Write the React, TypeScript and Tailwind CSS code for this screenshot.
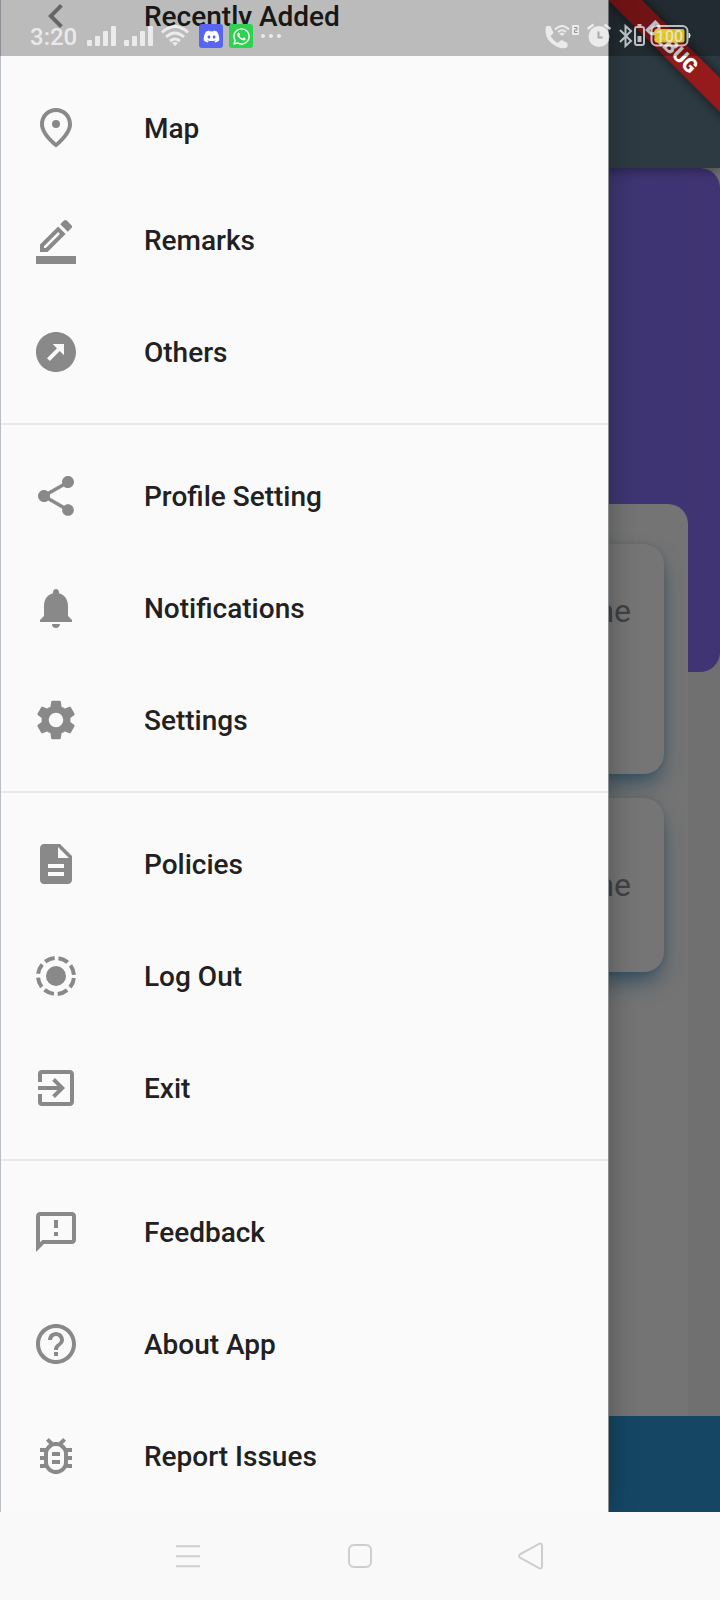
import type { ReactNode } from "react";
import { MdShare, MdNotifications, MdSettings, MdDescription, MdExitToApp, MdOutlineFeedback, MdHelpOutline, MdOutlineBugReport, MdOutbound } from "react-icons/md";
import { FaDiscord, FaWhatsapp } from "react-icons/fa";

function Svg({ children }: { children: ReactNode }) {
  return <svg viewBox="0 0 24 24" className="size-12" fill="currentColor">{children}</svg>;
}

const back = <Svg><path d="M15.41 7.41 14 6l-6 6 6 6 1.41-1.41L10.83 12z" /></Svg>;
const pin = (
  <Svg>
    <path d="M12 4c3.35 0 6 2.57 6 6.2 0 2.34-1.95 5.44-6 9.14-4.05-3.7-6-6.79-6-9.14C6 6.57 8.65 4 12 4m0-2C7.8 2 4 5.22 4 10.2c0 3.22 2.67 7.15 8 11.6 5.33-4.45 8-8.38 8-11.6C20 5.22 16.2 2 12 2z" />
    <circle cx="12" cy="10" r="2" />
  </Svg>
);
const pencil = (
  <Svg>
    <path d="M16.81 8.94l-3.75-3.75L4 14.25V18h3.75l9.06-9.06zM6 16v-.92l7.06-7.06.92.92L6.92 16H6zM19.71 6.04a1 1 0 0 0 0-1.41l-2.34-2.34a1 1 0 0 0-1.41 0l-1.83 1.83 3.75 3.75 1.83-1.83zM2 20h20v4H2z" />
  </Svg>
);
const motion = (
  <Svg>
    <circle cx="12" cy="12" r="5" />
    <circle cx="12" cy="12" r="9" fill="none" stroke="currentColor" strokeWidth="2" strokeDasharray="5.07 2" strokeDashoffset="-1" />
  </Svg>
);

type Item = { label: string; icon: ReactNode };
const groups: Item[][] = [
  [
    { label: "Recently Added", icon: back },
    { label: "Map", icon: pin },
    { label: "Remarks", icon: pencil },
    { label: "Others", icon: <MdOutbound className="size-12" /> },
  ],
  [
    { label: "Profile Setting", icon: <MdShare className="size-12" /> },
    { label: "Notifications", icon: <MdNotifications className="size-12" /> },
    { label: "Settings", icon: <MdSettings className="size-12" /> },
  ],
  [
    { label: "Policies", icon: <MdDescription className="size-12" /> },
    { label: "Log Out", icon: motion },
    { label: "Exit", icon: <MdExitToApp className="size-12" /> },
  ],
  [
    { label: "Feedback", icon: <MdOutlineFeedback className="size-12" /> },
    { label: "About App", icon: <MdHelpOutline className="size-12" /> },
    { label: "Report Issues", icon: <MdOutlineBugReport className="size-12" /> },
  ],
];

function Drawer() {
  return (
    <nav className="absolute left-0 top-0 h-[1512px] w-[608px] overflow-hidden border-l border-[#bbc0c6] bg-[#fafafa] shadow-[1px_0_0_#8b8f92,2px_0_26px_rgba(0,0,0,0.3)]">
      <div className="-mt-10">
        {groups.map((items, g) => (
          <div key={g} className={g ? "mt-[15px] border-t-2 border-[#e8e8e8] pt-[15px]" : ""}>
            {items.map((item) => (
              <div key={item.label} className="flex h-28 items-center pl-[31px]">
                <span className="w-28 text-[#898989]">{item.icon}</span>
                <span className="pt-0.5 text-[28px] font-medium leading-8 text-[#212121]">{item.label}</span>
              </div>
            ))}
          </div>
        ))}
      </div>
    </nav>
  );
}

function Card({ className }: { className: string }) {
  return (
    <div className={`flex w-[640px] items-center justify-end rounded-[20px] bg-[#757575] pr-[33px] text-[32px] leading-9 text-[#414141] shadow-[0_12px_22px_-4px_rgba(34,68,90,0.85),0_0_4px_rgba(60,66,72,0.25)] ${className}`}>
      Time
    </div>
  );
}

function Backdrop() {
  return (
    <div className="h-[1512px] overflow-hidden bg-[#707070]">
      <div className="relative h-[168px] bg-[#2d3a42] shadow-[0_3px_10px_rgba(0,0,0,0.35)]" />
      <div className="h-[504px] rounded-[20px] bg-linear-to-r from-[#223a6b] to-[#413474] pt-[336px]">
        <div className="ml-8 h-[912px] w-[656px] rounded-t-[20px] bg-[#747474] pt-10">
          <Card className="-ml-2 h-[230px] pb-[96px]" />
          <Card className="-ml-2 mt-6 h-[174px]" />
        </div>
        <div className="h-24 bg-[#154765]" />
      </div>
    </div>
  );
}

function Signal() {
  return (
    <svg viewBox="0 0 29 20" className="h-5 w-[29px]" fill="currentColor">
      <rect y="14" width="5" height="6" rx="1" />
      <rect x="8" y="10" width="5" height="10" rx="1" />
      <rect x="16" y="5" width="5" height="15" rx="1" />
      <rect x="24" width="5" height="20" rx="1" />
    </svg>
  );
}

function StatusBar() {
  return (
    <header className="absolute left-0 top-0 flex h-14 w-full items-center bg-black/25 pl-[30px] pt-4 text-white/70">
      <span className="w-[57px] pt-0.5 text-2xl font-medium leading-8">3:20</span>
      <Signal />
      <span className="w-2" />
      <Signal />
      <svg viewBox="0 0 28 22" className="ml-2 h-[22px] w-7" fill="none" stroke="currentColor" strokeWidth="3">
        <path d="M1 7.5Q14-4.5 27 7.5M5 12Q14 4 23 12M9 16Q14 12 19 16" />
        <path d="m14 21-3-3q3-2 6 0z" fill="currentColor" stroke="none" />
      </svg>
      <span className="ml-[10px] flex size-6 items-center justify-center rounded-[3px] bg-[#5865f2] text-white"><FaDiscord className="size-[17px]" /></span>
      <span className="ml-1.5 flex size-6 items-center justify-center rounded-[3px] bg-[#2fd150] text-white"><FaWhatsapp className="size-[19px]" /></span>
      <span className="ml-2 flex gap-1">
        <i className="size-1 rounded-full bg-current" />
        <i className="size-1 rounded-full bg-current" />
        <i className="size-1 rounded-full bg-current" />
      </span>
      <svg viewBox="0 0 150 26" className="ml-auto mr-[25px] h-[26px] w-[150px]" fill="none" stroke="currentColor">
        <path d="M4 2h4l3 7-3 3q3 5 7 7l4-3 6 3v4q-3 2-7 1Q3 19 3 6q0-3 1-4z" transform="translate(-2.500 1)" fill="currentColor" stroke="none" />
        <path d="M10 6.500Q17-.5 24 6.500M13 9Q17 5.500 21 9" strokeWidth="2" />
        <path d="m17 13-3-2.500q3-1.500 6 0z" fill="currentColor" stroke="none" />
        <rect x="27" y="2" width="7" height="10" rx="1" fill="currentColor" stroke="none" />
        <path d="M29 4.500h3v2.500h-2.500v2.500h3" stroke="#8f8f8f" strokeWidth="1" />
        <circle cx="54" cy="13.500" r="10.500" fill="currentColor" stroke="none" />
        <path d="m42.500 6 6-4.500m17 4.500-6-4.500" strokeWidth="2.500" />
        <path d="M53.500 8.500v6h4" stroke="#aaa" strokeWidth="2" />
        <path d="m75 7 11 11-5.500 5V3l5.500 5-11 11" strokeWidth="2" />
        <rect x="90" y="4" width="9" height="18" rx="2" strokeWidth="2" />
        <path d="M92.500 2h4" strokeWidth="2" />
        <path d="M94.500 13v6" strokeWidth="4" />
        <rect x="106.500" y="3" width="36" height="19.500" rx="5" strokeWidth="2" />
        <path d="M144 10q2.500 2.500 0 5z" fill="currentColor" />
        <rect x="109.500" y="6" width="30" height="13.500" rx="2" fill="#e6cc22" fillOpacity="0.92" stroke="none" />
        <text x="124.500" y="18.500" textAnchor="middle" fontSize="16" fontWeight="500" fill="#e9e3c4" stroke="none">100</text>
      </svg>
    </header>
  );
}

function DebugBanner() {
  return (
    <div className="absolute right-0 top-0 size-[180px] overflow-hidden">
      <div className="absolute left-3 top-[35px] flex h-6 w-[240px] rotate-45 items-center justify-center bg-[#961a1c] text-xl font-black leading-6 text-white shadow-[0_0_12px_rgba(0,0,0,0.6)]">
        DEBUG
      </div>
    </div>
  );
}

export default function App() {
  return (
    <main className="relative h-[1600px] w-[720px] overflow-hidden bg-[#f9f9f9] font-[Roboto,sans-serif]">
      <div className="relative h-[1512px] overflow-hidden">
        <Backdrop />
        {/* The banner sits behind the drawer, so its shadow stops at the panel edge. */}
        <DebugBanner />
        <Drawer />
        <StatusBar />
      </div>
      <footer className="flex h-[88px] items-center text-[#cecece]">
        <svg viewBox="0 0 720 88" className="h-[88px] w-[720px]" fill="none" stroke="currentColor" strokeWidth="2">
          <path d="M176 34.300h24M176 44.300h24M176 54.300h24" />
          <rect x="349" y="33" width="22" height="22" rx="5" />
          <path d="M520.500 42 539 31.800q3-1 3 2v20.400q0 3-3 2L520.500 46q-3-2 0-4z" />
        </svg>
      </footer>
    </main>
  );
}
